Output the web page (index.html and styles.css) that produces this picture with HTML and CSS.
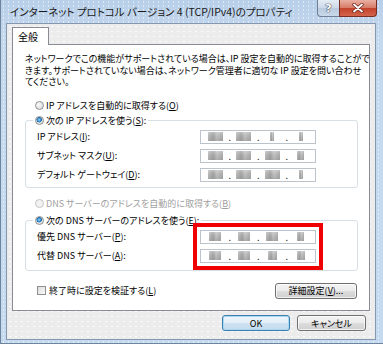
FILE: index.html
```html
<!DOCTYPE html>
<html lang="ja">
<head>
    <meta charset="UTF-8">
    <title>インターネット プロトコル バージョン 4 (TCP/IPv4)のプロパティ</title>
    <link rel="stylesheet" href="styles.css">
</head>
<body>
    <div class="window">
        <div class="titlebar">
            <span class="title">インターネット プロトコル バージョン 4 (TCP/IPv4)のプロパティ</span>
            <div class="caption-btns">
                <span class="cap-btn help">?</span>
                <span class="cap-btn close">
                    <svg width="14" height="10" viewBox="0 0 14 10">
                        <path d="M3 1.5 L11 8.5 M11 1.5 L3 8.5" stroke="#6b2a20" stroke-width="3.4" stroke-linecap="round"/>
                        <path d="M3 1.5 L11 8.5 M11 1.5 L3 8.5" stroke="#fff" stroke-width="1.8" stroke-linecap="round"/>
                    </svg>
                </span>
            </div>
        </div>

        <div class="client">
            <div class="tabs">
                <div class="tab active">全般</div>
            </div>

            <div class="panel">
                <p class="intro">
                    <span>ネットワークでこの機能がサポートされている場合は、IP 設定を自動的に取得することがで</span>
                    <span>きます。サポートされていない場合は、ネットワーク管理者に適切な IP 設定を問い合わせ</span>
                    <span>てください。</span>
                </p>

                <div class="option first">
                    <span class="radio"></span>
                    <span>IP アドレスを自動的に取得する(<u>O</u>)</span>
                </div>

                <!-- 固定 IP -->
                <fieldset class="group ip">
                    <legend>
                        <span class="option">
                            <span class="radio checked"></span>
                            <span>次の IP アドレスを使う(<u>S</u>):</span>
                        </span>
                    </legend>
                    <div class="rows">
                        <div class="row">
                            <label>IP アドレス(<u>I</u>):</label>
                            <div class="field">
                                <span class="seg"><i class="blk w15"></i></span><b>.</b>
                                <span class="seg"><i class="blk w15"></i></span><b>.</b>
                                <span class="seg"><i class="blk w4"></i></span><b>.</b>
                                <span class="seg"><i class="blk w4"></i></span>
                            </div>
                        </div>
                        <div class="row">
                            <label>サブネット マスク(<u>U</u>):</label>
                            <div class="field">
                                <span class="seg"><i class="blk w15"></i></span><b>.</b>
                                <span class="seg"><i class="blk w15"></i></span><b>.</b>
                                <span class="seg"><i class="blk w15"></i></span><b>.</b>
                                <span class="seg"><i class="blk w7"></i></span>
                            </div>
                        </div>
                        <div class="row">
                            <label>デフォルト ゲートウェイ(<u>D</u>):</label>
                            <div class="field">
                                <span class="seg"><i class="blk w15"></i></span><b>.</b>
                                <span class="seg"><i class="blk w15"></i></span><b>.</b>
                                <span class="seg"><i class="blk w15"></i></span><b>.</b>
                                <span class="seg"><i class="blk w4"></i></span>
                            </div>
                        </div>
                    </div>
                </fieldset>

                <div class="option disabled">
                    <span class="radio"></span>
                    <span>DNS サーバーのアドレスを自動的に取得する(<u>B</u>)</span>
                </div>

                <!-- DNS -->
                <fieldset class="group dns">
                    <legend>
                        <span class="option">
                            <span class="radio checked"></span>
                            <span>次の DNS サーバーのアドレスを使う(<u>E</u>):</span>
                        </span>
                    </legend>
                    <div class="dns-body">
                        <div class="dns-labels">
                            <label>優先 DNS サーバー(<u>P</u>):</label>
                            <label>代替 DNS サーバー(<u>A</u>):</label>
                        </div>
                        <div class="highlight">
                            <div class="field">
                                <span class="seg"><i class="blk w12"></i></span><b>.</b>
                                <span class="seg"><i class="blk w12"></i></span><b>.</b>
                                <span class="seg"><i class="blk w12"></i></span><b>.</b>
                                <span class="seg"><i class="blk w7"></i></span>
                            </div>
                            <div class="field">
                                <span class="seg"><i class="blk w12"></i></span><b>.</b>
                                <span class="seg"><i class="blk w12"></i></span><b>.</b>
                                <span class="seg"><i class="blk w9"></i></span><b>.</b>
                                <span class="seg"><i class="blk w8"></i></span>
                            </div>
                        </div>
                    </div>
                </fieldset>

                <div class="panel-footer">
                    <label class="check">
                        <span class="checkbox"></span>
                        <span>終了時に設定を検証する(<u>L</u>)</span>
                    </label>
                    <button class="btn detail">詳細設定(<u>V</u>)...</button>
                </div>
            </div>

            <div class="dialog-buttons">
                <button class="btn ok">OK</button>
                <button class="btn cancel">キャンセル</button>
            </div>
        </div>
    </div>
</body>
</html>
```

FILE: styles.css
```css
* {
    margin: 0;
    padding: 0;
    box-sizing: border-box;
}

body {
    width: 383px;
    height: 344px;
    overflow: hidden;
    font-family: "Noto Sans CJK JP", "Noto Sans", sans-serif;
    font-size: 9px;
    color: #000;
    font-feature-settings: "palt";
}

u {
    text-decoration: underline;
    text-underline-offset: 1px;
}

.window {
    width: 383px;
    height: 344px;
    display: flex;
    flex-direction: column;
    padding: 0 7px 3px 5px;
    border-left: 1px solid #6f849e;
    border-bottom: 1px solid #6f849e;
    background-color: #c3d7ed;
    background-image:
        radial-gradient(circle, rgba(255, 255, 255, 0.5) 0.6px, transparent 0.9px),
        linear-gradient(#b8cfe9, #c5d9ee 40px, #c6daef);
    background-size: 5px 4px, 100% 100%;
}

/* タイトルバー */
.titlebar {
    height: 23px;
    display: flex;
    align-items: flex-start;
}

.title {
    padding-left: 4px;
    line-height: 23px;
    font-size: 10.5px;
    color: #1a1a1a;
    white-space: nowrap;
}

.caption-btns {
    margin-left: auto;
    margin-right: -1px;
    display: flex;
}

.cap-btn {
    height: 17px;
    display: flex;
    align-items: center;
    justify-content: center;
    border: 1px solid #6f7f95;
    border-top: none;
}

.help {
    width: 22px;
    border-right: none;
    border-bottom-left-radius: 4px;
    background: linear-gradient(#e4ecf5, #ccd9e8 50%, #b9cade 50%, #c9d8e9);
    color: #fff;
    font-family: "DejaVu Sans", sans-serif;
    font-size: 11px;
    font-weight: bold;
    text-shadow: 0 0 1px #445, 0 0 1px #445, 0 0 1px #445;
}

.close {
    width: 38px;
    border-bottom-right-radius: 4px;
    border-color: #7a2f25;
    background: linear-gradient(#eab0a2, #d67a66 50%, #c2412a 50%, #d4644c);
}

/* クライアント領域 */
.client {
    flex: 1;
    display: flex;
    flex-direction: column;
    padding: 3px 5px 0 5px;
    border: 1px solid #8598b0;
    background-color: #ececec;
    background-image: radial-gradient(circle, #fbfbfb 0.6px, transparent 0.9px);
    background-size: 6px 5px;
}

.tabs {
    display: flex;
    height: 18px;
    margin-bottom: -1px;
    position: relative;
    z-index: 1;
}

.tab {
    width: 37px;
    padding-left: 5px;
    line-height: 17px;
    font-size: 10px;
    background: #fff;
    border: 1px solid #898c95;
    border-bottom: none;
}

.panel {
    height: 267px;
    padding: 8px 12px 0 12px;
    background: #fff;
    border: 1px solid #898c95;
}

.intro span {
    display: block;
    line-height: 11.5px;
    white-space: nowrap;
}

.option {
    display: flex;
    align-items: center;
    gap: 2px;
    height: 12px;
    margin-left: 10px;
    white-space: nowrap;
}

.option.first {
    margin-top: 12px;
}

.option.disabled {
    margin-top: 10px;
    color: #a0a0a0;
}

.radio {
    width: 9px;
    height: 9px;
    flex-shrink: 0;
    border-radius: 50%;
    border: 1px solid #8e8f8f;
    background: radial-gradient(circle at 35% 35%, #fafafa, #d4d4d4);
}

.radio.checked {
    background:
        radial-gradient(circle at 45% 40%, #a7dcfa 0, #2d88cf 1.8px, #1b5f9e 2.6px, transparent 2.8px),
        radial-gradient(circle at 35% 35%, #fafafa, #d4d4d4);
}

.disabled .radio {
    border-color: #c4c4c4;
    background: #f2f2f2;
}

/* グループ */
.group {
    width: 333px;
    border: 1px solid #d5dfe5;
    border-radius: 3px;
    padding: 3px 11px 5px 11px;
}

.group.ip {
    margin-top: 3px;
}

.group.dns {
    margin-top: 5px;
    padding-bottom: 7px;
}

.group legend {
    margin-left: -4px;
    padding: 0 2px;
}

.group legend .option {
    margin-left: 0;
}

.rows {
    display: flex;
    flex-direction: column;
    gap: 5px;
}

.row {
    display: flex;
    align-items: center;
    height: 14px;
}

.row label,
.dns-labels label {
    width: 163px;
    white-space: nowrap;
}

.dns-body {
    display: flex;
}

.dns-labels {
    display: flex;
    flex-direction: column;
    gap: 5px;
}

.dns-labels label {
    height: 14px;
    line-height: 14px;
}

.highlight {
    display: flex;
    flex-direction: column;
    gap: 5px;
    outline: 4px solid #f00000;
    outline-offset: 3px;
}

/* IP 入力欄 */
.field {
    width: 116px;
    height: 14px;
    display: flex;
    align-items: center;
    padding: 0 1px;
    border: 1px solid #bcc3cd;
    background: #fff;
}

.field b {
    font-weight: normal;
    width: 2px;
    text-align: center;
    color: #222;
    line-height: 10px;
    position: relative;
    top: 1px;
}

.seg {
    flex: 1;
    display: flex;
    justify-content: center;
}

.blk {
    height: 9px;
    background:
        linear-gradient(rgba(255, 255, 255, 0.25), transparent 40%, rgba(120, 120, 120, 0.25)),
        linear-gradient(90deg, #bdbdbd, #a3a3a3 35%, #c2c2c2 60%, #a9a9a9);
    filter: blur(0.4px);
}

.w4 { width: 4px; }
.w7 { width: 7px; }
.w8 { width: 8px; }
.w9 { width: 9px; }
.w12 { width: 12px; }
.w15 { width: 15px; }

/* 下部 */
.panel-footer {
    margin-top: 12px;
    height: 16px;
    display: flex;
    align-items: center;
    justify-content: space-between;
    padding-left: 12px;
}

.check {
    display: flex;
    align-items: center;
    gap: 3px;
}

.checkbox {
    width: 9px;
    height: 9px;
    border: 1px solid #8e8f8f;
    background: linear-gradient(135deg, #dcdcdc, #fbfbfb);
}

.btn {
    height: 16px;
    font-family: inherit;
    font-size: 9px;
    font-feature-settings: "palt";
    color: #000;
    border: 1px solid #707070;
    border-radius: 3px;
    background: linear-gradient(#f3f3f3, #ebebeb 50%, #dddddd 50%, #cfcfcf);
    box-shadow: inset 0 0 0 1px rgba(255, 255, 255, 0.7);
}

.btn.detail {
    width: 82px;
}

.dialog-buttons {
    margin-top: 4px;
    display: flex;
    justify-content: flex-end;
    gap: 7px;
    padding-right: 4px;
}

.btn.ok {
    width: 68px;
    border-color: #3c7fb1;
    background: linear-gradient(#eef6fc, #e2eef8 50%, #cfe2f2 50%, #c4dbef);
    box-shadow: inset 0 0 0 1px #a9d8f5;
}

.btn.cancel {
    width: 69px;
}
```
